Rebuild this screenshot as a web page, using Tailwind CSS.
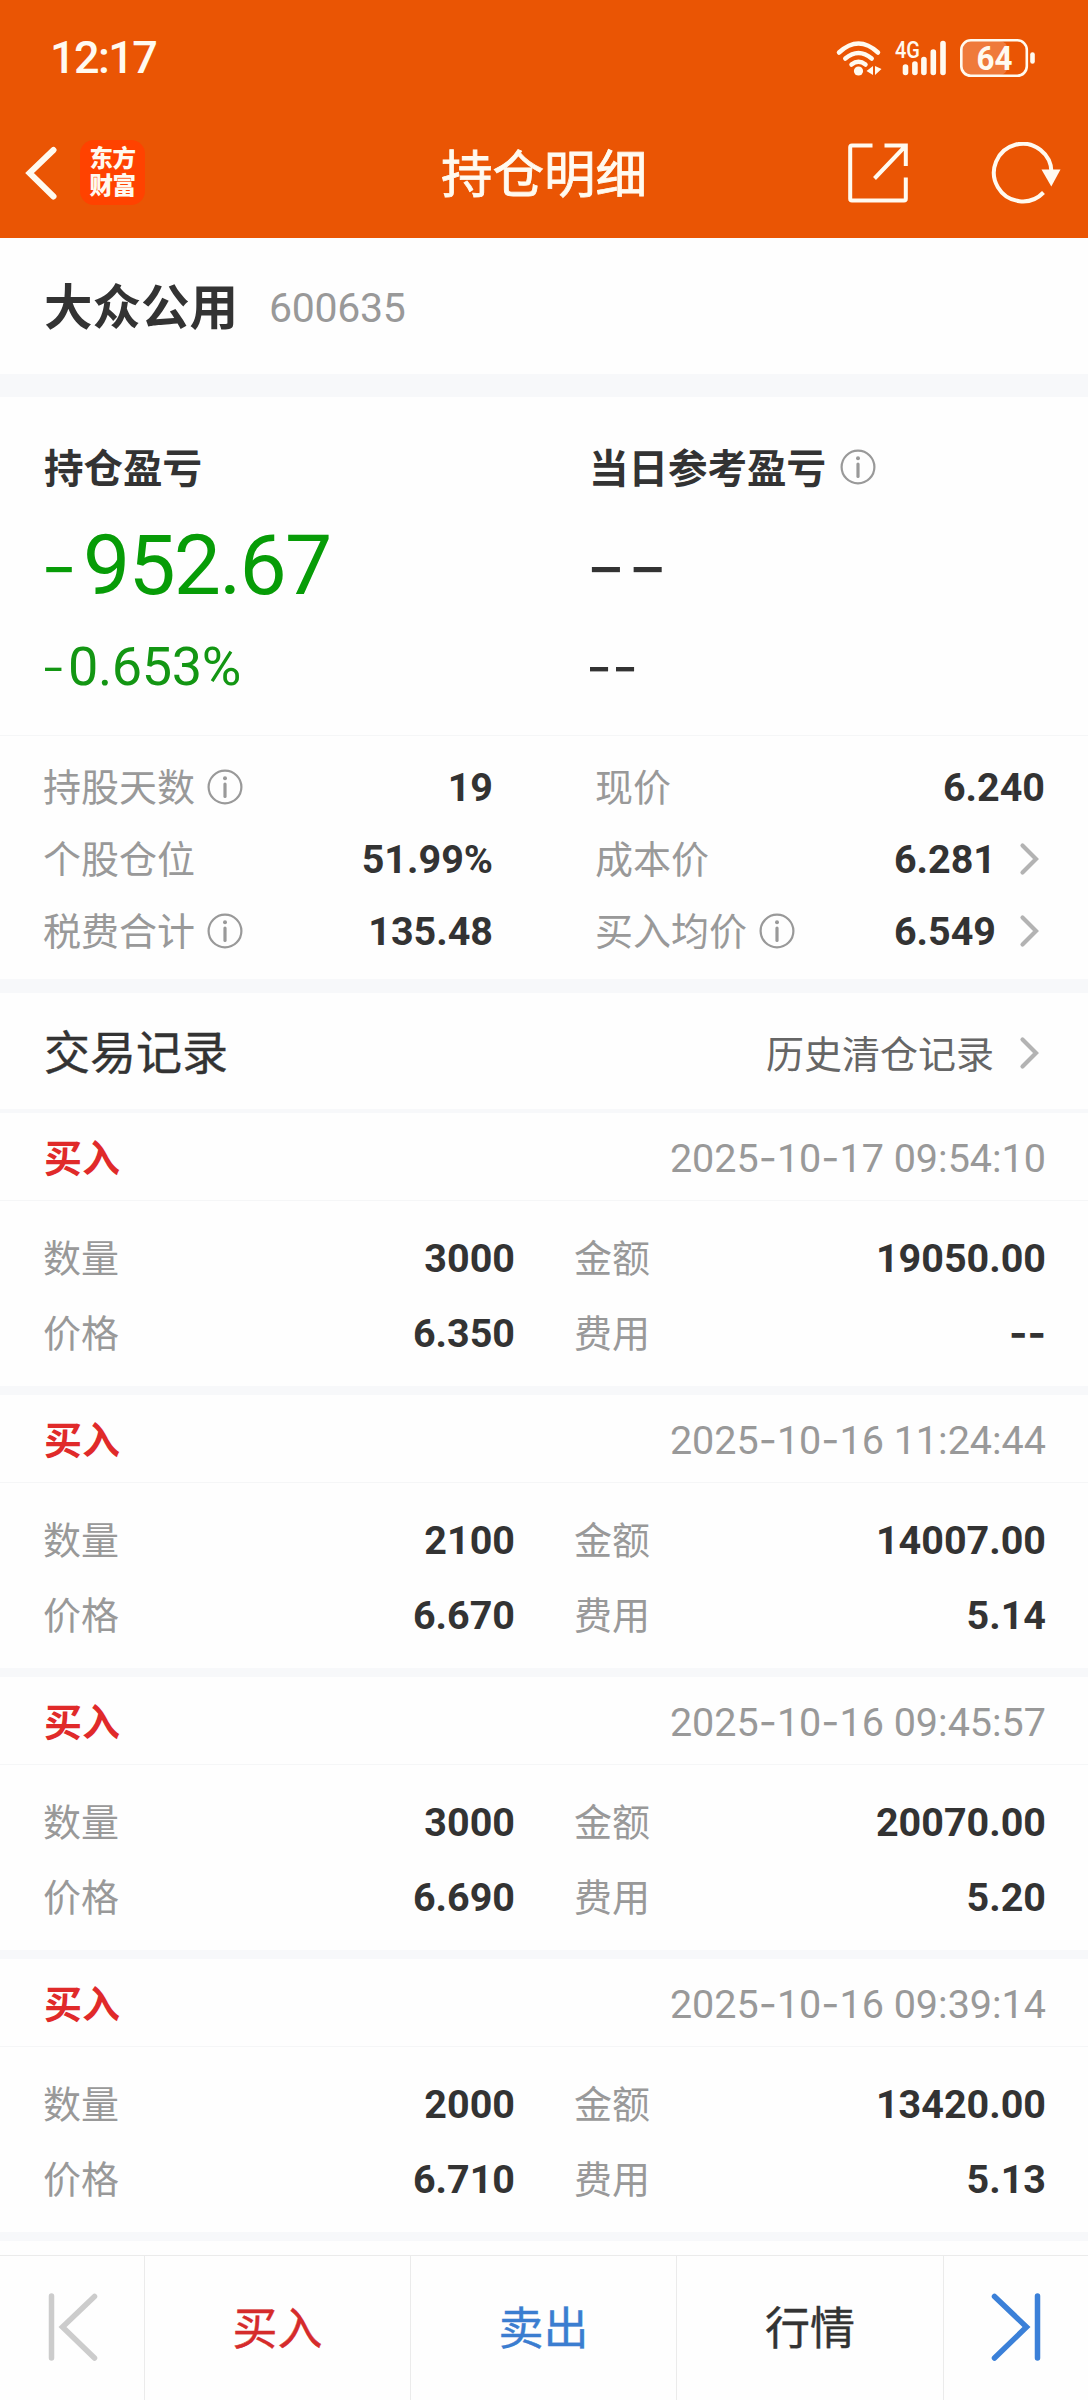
<!DOCTYPE html>
<html lang="zh-CN">
<head>
<meta charset="utf-8">
<title>持仓明细</title>
<script src="https://cdn.jsdelivr.net/npm/@tailwindcss/browser@4"></script>
</head>
<body class="bg-white">
<div class="flex h-[2400px] w-[1088px] flex-col overflow-hidden bg-[#fefefe] font-[Roboto,'Noto_Sans_CJK_SC',sans-serif] leading-none text-[#333]">

  <header class="flex h-[238px] shrink-0 flex-col bg-[#ea5504] text-[#fffaf0]">
    <div class="flex h-[115px] items-center justify-between pl-[50px] pr-[52px]">
      <div class="text-[45px] font-medium tracking-[-1.6px]">12:17</div>
      <svg class="h-[48px] w-[200px] overflow-visible" viewBox="835 32 200 48" fill="none" stroke="currentColor" stroke-linecap="round">
        <path d="M838 50.500Q857.500 32.500 877 50.500M844.300 56.500Q857.500 45.500 870.700 56.500M850.500 62.500Q857.500 57 864.500 62.500" stroke-width="4.500"/>
        <circle cx="857.500" cy="69" r="4.600" fill="currentColor" stroke="none"/>
        <path d="M872 64v9l-6.500-4zM874 64l6.500 3-6.500 6z" fill="currentColor" stroke="none"/>
        <text x="894" y="56" font-size="24" font-weight="500" textLength="25" lengthAdjust="spacingAndGlyphs" fill="currentColor" stroke="none">4G</text>
        <path d="M904.500 65v5.500M913.900 62v8.500M922.900 57.500v13M932.300 50v20.500M942 41.500v29" stroke-width="5.600"/>
        <rect x="960.500" y="39" width="46" height="34" rx="8" fill="#ef7a3b" stroke="none"/>
        <rect x="960.300" y="38.300" width="65.500" height="35.500" rx="9.500" stroke-width="2.600"/>
        <path d="M1031.500 52.500v7" stroke-width="4.600"/>
        <text x="993.500" y="68" font-size="34" font-weight="700" text-anchor="middle" textLength="36" lengthAdjust="spacingAndGlyphs" fill="currentColor" stroke="none">64</text>
      </svg>
    </div>
    <div class="grid h-[115px] grid-cols-[1fr_auto_1fr] items-center">
      <div class="flex items-center pl-[24px]">
        <svg class="h-[54px] w-[34px]" viewBox="0 0 34 54" fill="none" stroke="currentColor" stroke-width="6" stroke-linecap="round"><path d="M29.500 4 5.500 27l24 23.500"/></svg>
        <div class="ml-[22px] flex h-[65px] w-[65px] flex-col items-center justify-center rounded-[14px] bg-[#ff4200] text-[23.500px] leading-[27px] font-black tracking-[-0.5px]"><span>东方</span><span>财富</span></div>
      </div>
      <h1 class="pt-[6px] text-[51.500px] font-normal [-webkit-text-stroke:0.8px]">持仓明细</h1>
      <div class="flex items-center justify-end gap-[81px] pr-[27px]">
        <svg class="h-[62px] w-[62px]" viewBox="0 0 62 62" fill="none" stroke="currentColor" stroke-width="4"><path d="M25.500 3.500H5a1.800 1.800 0 0 0-1.800 1.800v51.400A1.800 1.800 0 0 0 5 58.500h52a1.800 1.800 0 0 0 1.800-1.800V35.500M37.500 3.500h21.300V24M58 4.500 27.500 36.500"/></svg>
        <svg class="h-[62px] w-[71px]" viewBox="0 0 71 62" fill="none" stroke="currentColor" stroke-width="4"><path d="M61.500 31A28.800 28.800 0 1 0 53.500 50.500"/><path d="M51.500 27.500h19L61.300 44.500z" fill="currentColor" stroke="none"/></svg>
      </div>
    </div>
  </header>

  <section class="flex h-[136px] shrink-0 items-center gap-[31px] px-[44px] pt-[4px]">
    <h2 class="pt-[2px] text-[48.500px] font-bold">大众公用</h2>
    <span class="text-[41px] tracking-[-0.3px] text-[#999]">600635</span>
  </section>
  <div class="h-[23px] shrink-0 bg-[#f7f8fa]"></div>

  <section class="grid h-[339px] shrink-0 grid-cols-[545px_1fr] border-b border-[#f5f6f7] pl-[44px] pt-[50px]">
    <div>
      <div class="flex h-[40px] items-center pt-[5px] text-[39.500px] font-bold">持仓盈亏</div>
      <div class="mt-[39px] flex h-[80px] items-center text-[84px] tracking-[-1.800px] text-[#079c07]"><span class="-ml-[4px] w-[43px] font-[Inter] font-light">-</span>952.67</div>
      <div class="mt-[29px] flex h-[64px] items-center text-[54px] tracking-[-0.4px] text-[#139613]"><span class="-ml-[3px] w-[27px] font-[Inter] font-light">-</span>0.653%</div>
    </div>
    <div>
      <div class="flex h-[40px] items-center gap-[14px] text-[39.500px] font-bold"><span class="pt-[5px]">当日参考盈亏</span> <svg class="info"></svg></div>
      <div class="-ml-[4px] mt-[39px] flex h-[80px] items-center font-[Inter] text-[84px]"><span class="origin-left scale-x-110 font-light">--</span></div>
      <div class="-ml-[3px] mt-[29px] flex h-[64px] items-center font-[Inter] text-[54px]"><span class="origin-left scale-x-105">--</span></div>
    </div>
  </section>

  <section class="grid h-[243px] shrink-0 grid-cols-[450px_450px] content-start gap-x-[102px] pl-[43px] pt-[15px]" id="stats"></section>
  <div class="h-[14px] shrink-0 bg-[#f7f8fa]"></div>

  <section class="flex h-[120px] shrink-0 items-center justify-between border-b-4 border-[#f7f8fa] pl-[44px] pr-[48px]">
    <h3 class="pt-[4px] text-[46px] font-normal [-webkit-text-stroke:0.4px]">交易记录</h3>
    <div class="flex items-center gap-[24px] pt-[4px] text-[38px] text-[#666]"><span class="pt-[4px]">历史清仓记录</span> <svg class="chev"></svg></div>
  </section>

  <main class="h-[1142px] shrink-0" id="records"></main>

  <footer class="grid grow grid-cols-[145px_266px_266px_267px_1fr] divide-x divide-[#ebebeb] border-t border-[#ebebeb] text-[45px]">
    <div class="flex items-center justify-center pb-[3px] pl-[1px]"><svg class="h-[70px] w-[52px]" viewBox="0 0 52 70" fill="none" stroke="#ccc" stroke-width="5.500" stroke-linecap="round"><path d="M4.500 4v62M47.500 4.500 15.500 35l32 31"/></svg></div>
    <div class="flex items-center justify-center pt-[2px] text-[#d52b2b] [-webkit-text-stroke:0.4px]">买入</div>
    <div class="flex items-center justify-center pt-[2px] text-[#3b7dd0] [-webkit-text-stroke:0.4px]">卖出</div>
    <div class="flex items-center justify-center pt-[2px] [-webkit-text-stroke:0.4px]">行情</div>
    <div class="flex items-center justify-center pb-[3px]"><svg class="h-[70px] w-[52px]" viewBox="0 0 52 70" fill="none" stroke="#3b80d8" stroke-width="5.500" stroke-linecap="round"><path d="M47.500 4v62M4.500 4.500l32 30.500-32 31"/></svg></div>
  </footer>
</div>
<script>
const info = '<svg class="size-[36px] shrink-0" viewBox="0 0 36 36" fill="none" stroke="#999"><circle cx="18" cy="18" r="16.400" stroke-width="2.200"/><circle cx="18" cy="9.200" r="2" fill="#999" stroke="none"/><path d="M18 15v12.500" stroke-width="3.200" stroke-linecap="round"/></svg>';
const chev = '<svg class="h-[34px] w-[22px] shrink-0" viewBox="0 0 22 34" fill="none" stroke="#b3b3b3" stroke-width="4.200" stroke-linecap="round"><path d="M4.500 3.500 18 17 4.500 30.500"/></svg>';
document.querySelectorAll('.info').forEach(e => e.outerHTML = info);
document.querySelectorAll('.chev').forEach(e => e.outerHTML = chev);

const stats = [
  ['持股天数', '19', 1, 0], ['现价', '6.240', 0, 0],
  ['个股仓位', '51.99%', 0, 0], ['成本价', '6.281', 0, 1],
  ['税费合计', '135.48', 1, 0], ['买入均价', '6.549', 1, 1],
];
document.getElementById('stats').innerHTML = stats.map(([k, v, i, c]) => `
  <div class="flex h-[72px] items-center">
    <span class="mr-[12px] pt-[1px] text-[38px] text-[#999]">${k}</span>${i ? info : ''}
    <span class="ml-auto pt-[2px] text-[39.5px] font-bold">${v}</span>${c ? '<span class="ml-[22px] mr-[5px]">' + chev + '</span>' : ''}
  </div>`).join('');

const records = [
  ['2025-10-17 09:54:10', '3000', '19050.00', '6.350', '--'],
  ['2025-10-16 11:24:44', '2100', '14007.00', '6.670', '5.14'],
  ['2025-10-16 09:45:57', '3000', '20070.00', '6.690', '5.20'],
  ['2025-10-16 09:39:14', '2000', '13420.00', '6.710', '5.13'],
];
const dash = s => s.replace(/-+/g, m => `<span class="font-[Inter]">${m}</span>`);
const cell = (k, v) => `<div class="flex h-[75px] items-center justify-between pt-[2px]"><span class="text-[38px] text-[#999]">${k}</span><span class="text-[39.5px] font-bold">${dash(v)}</span></div>`;
document.getElementById('records').innerHTML = records.map(([t, q, a, p, f]) => `
  <article class="h-[282px] border-b-9 border-[#f7f8fa]">
    <div class="flex h-[88px] items-center justify-between border-b border-[#f5f6f7] pt-[4px] pl-[44px] pr-[42px]">
      <span class="text-[38px] font-bold text-[#e02a2a]">买入</span>
      <span class="text-[39.5px] text-[#999]">${dash(t)}</span>
    </div>
    <div class="grid grid-cols-[472px_472px] gap-x-[59px] pl-[43px] pt-[19px]">
      ${cell('数量', q)}${cell('金额', a)}${cell('价格', p)}${cell('费用', f)}
    </div>
  </article>`).join('');
</script>
</body>
</html>
